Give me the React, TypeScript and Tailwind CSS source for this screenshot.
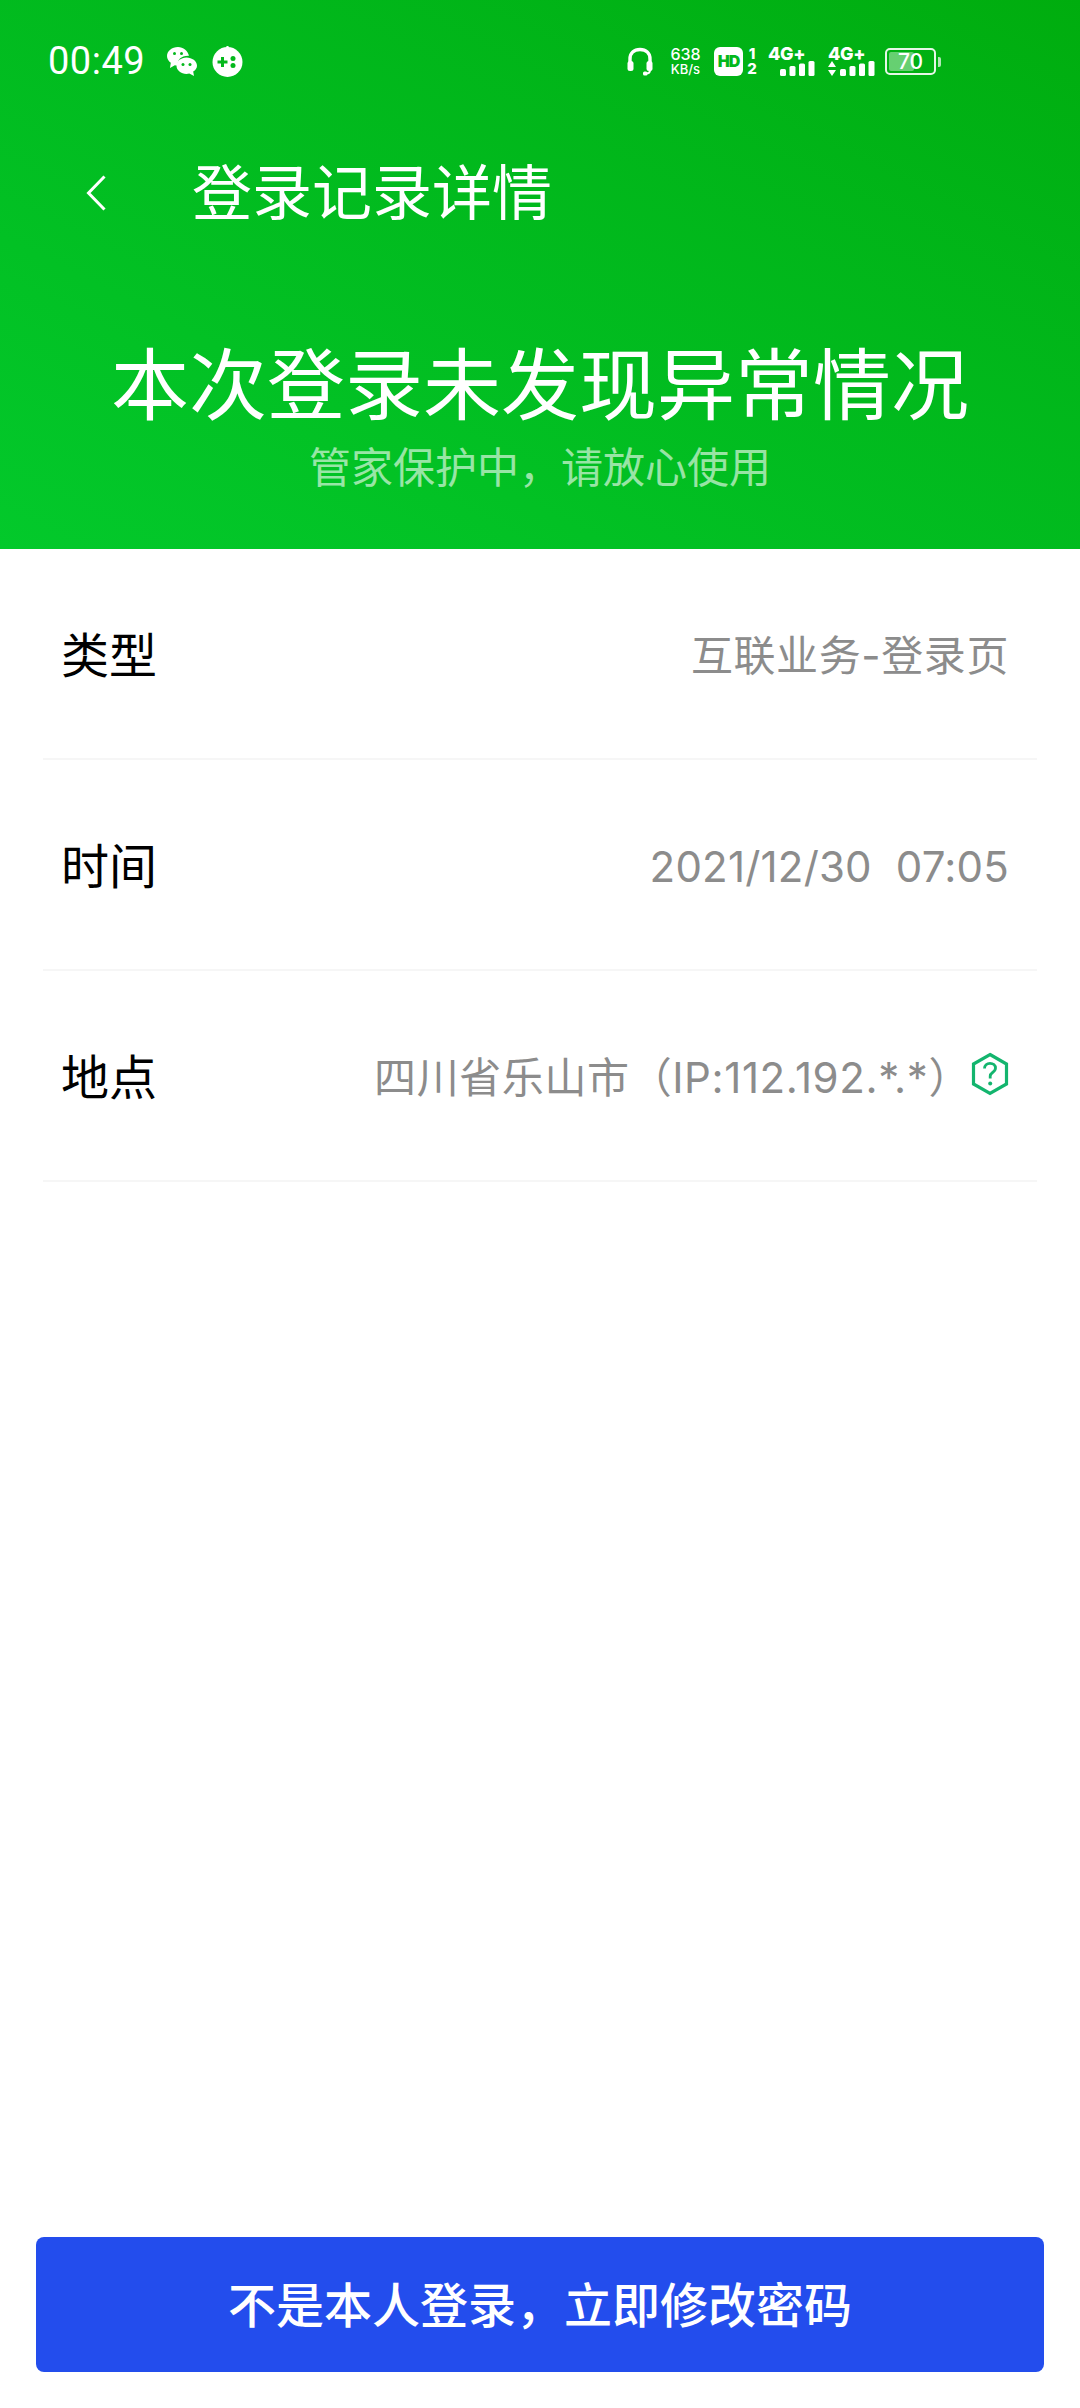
import React from "react";

const sans = "font-['Inter','Noto_Sans_CJK_SC',sans-serif]";

function WechatIcon() {
  return (
    <svg width="31" height="31" viewBox="0 0 31 31">
      <path fill="white" d="M12 1C5.900 1 1 5 1 10c0 2.800 1.500 5.200 3.800 6.800L4 22l4.800-2.800c.9.200 1.900.3 2.900.3C11.200 14 15 9.500 23 9.800 21.800 4.800 17.300 1 12 1z" />
      <circle cx="8.500" cy="7.500" r="1.500" fill="#04b81c" />
      <circle cx="15.500" cy="7.500" r="1.500" fill="#04b81c" />
      <path fill="white" d="M20.500 11.500c-5.500 0-10 3.600-10 8.200s4.500 8.200 10 8.200c1 0 1.900-.1 2.800-.4L28 30l-.8-4.400c2.300-1.500 3.800-3.500 3.800-5.900 0-4.600-5-8.200-10.500-8.200z" />
      <circle cx="17" cy="18.500" r="1.500" fill="#04b81c" />
      <circle cx="24" cy="18.500" r="1.500" fill="#04b81c" />
    </svg>
  );
}

function GameIcon() {
  return (
    <svg width="31" height="31" viewBox="0 0 31 31">
      <rect x="14.200" y="0" width="2.600" height="5" rx="1" fill="white" />
      <circle cx="15.500" cy="16" r="15" fill="white" />
      <path fill="#04b81c" d="M5.500 14.500h3.500V11h3v3.500h3.500v3H12V21H9v-3.500H5.500z" />
      <circle cx="21" cy="12.500" r="2.500" fill="#04b81c" />
      <circle cx="21" cy="19.500" r="2.500" fill="#04b81c" />
    </svg>
  );
}

function HeadphonesIcon() {
  return (
    <svg width="26" height="29" viewBox="0 0 26 29" fill="none">
      <path d="M3 18V12C3 6 7 2.500 13 2.500S23 6 23 12v6" stroke="white" strokeWidth="3.400" />
      <rect x="0.500" y="14" width="6" height="10" rx="2.500" fill="white" />
      <rect x="19.500" y="14" width="6" height="10" rx="2.500" fill="white" />
      <path d="M23 23c0 2.500-1.500 3.500-4 3.500" stroke="white" strokeWidth="2" />
      <rect x="16" y="24.500" width="4.500" height="4" rx="1.500" fill="white" />
    </svg>
  );
}

function Bars() {
  return (
    <svg width="35" height="15" viewBox="0 0 35 15">
      <rect x="0" y="8" width="6" height="7" rx="1.500" fill="white" />
      <rect x="9.500" y="5" width="6" height="10" rx="1.500" fill="white" />
      <rect x="19" y="2.500" width="6" height="12.500" rx="1.500" fill="white" />
      <rect x="28.500" y="0" width="6" height="15" rx="1.500" fill="white" />
    </svg>
  );
}

function Signal({ arrows }: { arrows?: boolean }) {
  return (
    <div className="flex flex-col items-start w-[47px]">
      <span className="text-[18px] leading-[15px] font-extrabold text-white tracking-[-0.3px]">4G+</span>
      <div className="flex items-end">
        {arrows ? (
          <svg width="8" height="15" viewBox="0 0 8 15" className="mr-[4px]">
            <path d="M4 0l4 6H0z" fill="white" />
            <path d="M4 15l4-6H0z" fill="white" />
          </svg>
        ) : (
          <div className="w-[12px]" />
        )}
        <Bars />
      </div>
    </div>
  );
}

function HexHelpIcon() {
  return (
    <svg width="38" height="44" viewBox="0 0 38 44" fill="none">
      <path d="M19 2.500 35.500 12v20L19 41.500 2.500 32V12z" stroke="#13b56e" strokeWidth="3.200" />
      <path d="M13.500 16.500c0-3.200 2.400-5.200 5.500-5.200s5.500 2 5.500 4.800c0 2.200-1.300 3.300-2.900 4.400-1.400 1-2.400 1.900-2.400 3.700v2.300" stroke="#13b56e" strokeWidth="2.800" />
      <circle cx="19.200" cy="31.500" r="2" fill="#13b56e" />
    </svg>
  );
}

function InfoRow({ label, value, icon, spacing }: { label: string; value: string; icon?: boolean; spacing: string }) {
  return (
    <div className="h-[211px] flex items-center justify-between pl-[18px] pr-[28px] pt-[4px] border-b-2 border-[#f6f6f6]">
      <span className="text-[48px] leading-none text-black">{label}</span>
      <div className="flex items-center">
        <span className={`text-[42px] leading-none text-[#8c8c8c] whitespace-pre ${spacing}`}>{value}</span>
        {icon && <span className="mt-[-8px] flex"><HexHelpIcon /></span>}
      </div>
    </div>
  );
}

export default function App() {
  return (
    <div className={`${sans} w-[1080px] h-[2408px] bg-white flex flex-col overflow-hidden`}>
      <header className="h-[549px] bg-gradient-to-tr from-[#03c92b] to-[#00ad0e] flex flex-col">
        {/* status bar */}
        <div className="h-[122px] flex items-center justify-between pl-[48px] pr-[144px] text-white">
          <div className="flex items-center">
            <span className="font-['Roboto',sans-serif] text-[38px] leading-none tracking-[0.5px]">00:49</span>
            <span className="ml-[21px] flex"><WechatIcon /></span>
            <span className="ml-[15px] flex"><GameIcon /></span>
          </div>
          <div className="flex items-center">
            <HeadphonesIcon />
            <div className="ml-[15px] w-[35px] flex flex-col items-center text-[16px] leading-[17px] font-medium">
              <span>638</span>
              <span className="text-[13px] leading-[13px] whitespace-nowrap">KB/s</span>
            </div>
            <div className="ml-[11px] w-[29px] h-[29px] bg-white rounded-[6px] flex items-center justify-center text-[16px] font-black text-[#04b81c] tracking-[-1px]">HD</div>
            <div className="ml-[3px] w-[12px] flex flex-col items-center text-[15px] leading-[15px] font-extrabold">
              <span>1</span>
              <span>2</span>
            </div>
            <div className="ml-[10px]"><Signal /></div>
            <div className="ml-[13px]"><Signal arrows /></div>
            <div className="ml-[10px] relative w-[51px] h-[27px] border-2 border-white/90 rounded-[5px] p-[2px]">
              <div className="w-[25px] h-full bg-white/40 rounded-[2px]" />
              <span className="absolute inset-0 flex items-center justify-center text-[21px] leading-none font-medium text-white">70</span>
              <span className="absolute right-[-7px] top-[7px] w-[3px] h-[10px] bg-white/70 rounded-r-[2px]" />
            </div>
          </div>
        </div>

        {/* nav */}
        <div className="h-[100px] mt-[21px] flex items-center pl-[86px] text-white">
          <svg width="20" height="36" viewBox="0 0 20 36" fill="none">
            <path d="M18.500 1.500 2.500 18l16 16.500" stroke="white" strokeWidth="3" />
          </svg>
          <h1 className="ml-[86px] text-[60px] leading-none font-normal">登录记录详情</h1>
        </div>

        {/* summary */}
        <div className="mt-[99px] flex flex-col items-center text-center">
          <p className="text-[78px] leading-[88px] text-white">本次登录未发现异常情况</p>
          <p className="mt-[13px] text-[42px] leading-[50px] text-white/60">管家保护中，请放心使用</p>
        </div>
      </header>

      <section className="mx-[43px] flex flex-col">
        <InfoRow label="类型" value="互联业务-登录页" spacing="tracking-[0.6px]" />
        <InfoRow label="时间" value="2021/12/30  07:05" spacing="tracking-[0.2px]" />
        <InfoRow label="地点" value="四川省乐山市（IP:112.192.*.*）" spacing="tracking-[0.6px]" icon />
      </section>

      <button className="mt-auto mb-[36px] mx-[36px] h-[135px] pt-[3px] rounded-[8px] bg-[#234ded] text-white text-[48px] font-medium leading-none">
        不是本人登录，立即修改密码
      </button>
    </div>
  );
}
